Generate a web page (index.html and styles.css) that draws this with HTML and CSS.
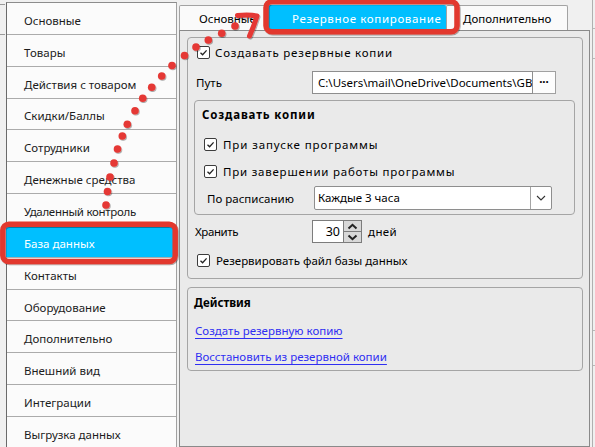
FILE: index.html
```html
<!DOCTYPE html>
<html lang="ru">
<head>
<meta charset="utf-8">
<title>Настройки — Резервное копирование</title>
<link rel="stylesheet" href="styles.css">
</head>
<body>
<div class="app">
  <div class="edge-left">
    <i class="tick tick-a"></i>
    <i class="tick tick-b"></i>
  </div>

  <nav class="sidebar">
    <div class="nav-item">Основные</div>
    <div class="nav-item">Товары</div>
    <div class="nav-item">Действия с товаром</div>
    <div class="nav-item">Скидки/Баллы</div>
    <div class="nav-item">Сотрудники</div>
    <div class="nav-item">Денежные средства</div>
    <div class="nav-item nav-item-tight">Удаленный контроль</div>
    <div class="nav-item nav-item-active">База данных</div>
    <div class="nav-item">Контакты</div>
    <div class="nav-item">Оборудование</div>
    <div class="nav-item">Дополнительно</div>
    <div class="nav-item">Внешний вид</div>
    <div class="nav-item">Интеграции</div>
    <div class="nav-item">Выгрузка данных</div>
  </nav>

  <main class="main">
    <div class="tabs">
      <div class="tab tab-first">Основные</div>
      <div class="tab tab-active">Резервное копирование</div>
      <div class="tab tab-last">Дополнительно</div>
    </div>

    <div class="panel">
      <section class="group group-backup">
        <div class="row row-enable">
          <span class="cb"><svg viewBox="0 0 11 11" width="11" height="11"><polyline points="2.5,5.8 4.6,7.8 8.6,3.4" fill="none" stroke="#222" stroke-width="1.3"/></svg></span>
          <span class="cb-label cb-label-loose">Создавать резервные копии</span>
        </div>

        <div class="row row-path">
          <span class="label label-wide">Путь</span>
          <div class="path">
            <div class="path-input">C:\Users\mail\OneDrive\Documents\GBS\Backup</div>
            <div class="path-btn">···</div>
          </div>
        </div>

        <section class="subgroup">
          <div class="subgroup-title">Создавать копии</div>
          <div class="row row-check row-first">
            <span class="cb"><svg viewBox="0 0 11 11" width="11" height="11"><polyline points="2.5,5.8 4.6,7.8 8.6,3.4" fill="none" stroke="#222" stroke-width="1.3"/></svg></span>
            <span class="cb-label cb-label-loose cb-label-looser">При запуске программы</span>
          </div>
          <div class="row row-check row-second">
            <span class="cb"><svg viewBox="0 0 11 11" width="11" height="11"><polyline points="2.5,5.8 4.6,7.8 8.6,3.4" fill="none" stroke="#222" stroke-width="1.3"/></svg></span>
            <span class="cb-label cb-label-loose">При завершении работы программы</span>
          </div>
          <div class="row row-schedule">
            <span class="label label-schedule">По расписанию</span>
            <div class="select">
              <div class="select-value">Каждые 3 часа</div>
              <div class="select-arrow"><svg viewBox="0 0 10 6" width="10" height="6"><polyline points="1,1 5,5 9,1" fill="none" stroke="#333" stroke-width="1.1"/></svg></div>
            </div>
          </div>
        </section>

        <div class="row row-keep">
          <span class="label label-keep">Хранить</span>
          <div class="spin">
            <div class="spin-value">30</div>
            <div class="spin-btns">
              <span class="spin-btn"><svg viewBox="0 0 11 7" width="11" height="7"><polyline points="1.5,5.5 5.5,1.8 9.5,5.5" fill="none" stroke="#222" stroke-width="2"/></svg></span>
              <span class="spin-btn spin-btn-down"><svg viewBox="0 0 11 7" width="11" height="7"><polyline points="1.5,1.5 5.5,5.2 9.5,1.5" fill="none" stroke="#222" stroke-width="2"/></svg></span>
            </div>
          </div>
          <span class="unit">дней</span>
        </div>

        <div class="row row-dbfile">
          <span class="cb"><svg viewBox="0 0 11 11" width="11" height="11"><polyline points="2.5,5.8 4.6,7.8 8.6,3.4" fill="none" stroke="#222" stroke-width="1.3"/></svg></span>
          <span class="cb-label">Резервировать файл базы данных</span>
        </div>
      </section>

      <section class="group group-actions">
        <div class="group-title">Действия</div>
        <div class="link-row link-row-first"><a class="link">Создать резервную копию</a></div>
        <div class="link-row link-row-second"><a class="link">Восстановить из резервной копии</a></div>
      </section>
    </div>
  </main>

  <div class="edge-right">
    <i class="rtick rtick-a"></i>
    <i class="rtick rtick-b"></i>
    <i class="rtick rtick-c"></i>
    <i class="rtick rtick-d"></i>
  </div>
</div>

<svg class="annotations" viewBox="0 0 595 447" width="595" height="447" aria-hidden="true">
  <defs>
    <filter id="sh" x="-50%" y="-50%" width="200%" height="200%">
      <feDropShadow dx="0.8" dy="1" stdDeviation="0.7" flood-color="#000" flood-opacity="0.35"/>
    </filter>
  </defs>
  <g fill="none" stroke="#e2392f" stroke-width="5.5" filter="url(#sh)">
    <rect x="2.8" y="224.2" width="172.4" height="37.3" rx="6"/>
    <rect x="266" y="1.4" width="191" height="30.3" rx="6"/>
  </g>
  <g fill="#e53935" filter="url(#sh)">
    <circle cx="106" cy="205" r="3.8"/>
    <circle cx="107.5" cy="191.5" r="3.8"/>
    <circle cx="110" cy="177" r="3.8"/>
    <circle cx="114" cy="163" r="3.8"/>
    <circle cx="117.5" cy="149" r="3.8"/>
    <circle cx="122.3" cy="136" r="3.8"/>
    <circle cx="127.3" cy="124.3" r="3.8"/>
    <circle cx="135" cy="110.7" r="3.8"/>
    <circle cx="142.7" cy="98.3" r="3.8"/>
    <circle cx="151.7" cy="87.3" r="3.8"/>
    <circle cx="161.7" cy="76" r="3.8"/>
    <circle cx="172" cy="65.5" r="3.8"/>
    <circle cx="184.5" cy="55.5" r="3.8"/>
    <circle cx="196" cy="47" r="3.8"/>
    <circle cx="208.3" cy="40" r="3.8"/>
    <circle cx="221.7" cy="33.3" r="3.8"/>
    <circle cx="235" cy="26" r="3.8"/>
  </g>
  <path d="M237.5 15.5 Q250 14.5 257 16 Q254 26 249.5 36" fill="none" stroke="#e53935" stroke-width="5" stroke-linecap="round" stroke-linejoin="round" filter="url(#sh)"/>
</svg>
</body>
</html>
```

FILE: styles.css
```css
html, body {
  margin: 0;
  padding: 0;
}

body {
  width: 595px;
  height: 447px;
  overflow: hidden;
  position: relative;
  background: #f0f0f0;
  font-family: "Noto Sans", "Open Sans", sans-serif;
  font-size: 11.5px;
  color: #000;
}

.app {
  display: flex;
  height: 447px;
}

/* left remnant strip */
.edge-left {
  width: 6px;
  display: flex;
  flex-direction: column;
}

.tick {
  display: block;
  width: 5px;
  height: 1px;
  background: #9a9a9a;
}

.tick-a { margin-top: 4px; }
.tick-b { margin-top: 29px; }

/* sidebar */
.sidebar {
  width: 169px;
  margin-top: 2px;
  border-top: 1px solid #8c8c8c;
  border-left: 1px solid #6a6a6a;
  border-right: 1px solid #a0a0a0;
  background: #fbfbfb;
  display: flex;
  flex-direction: column;
}

.nav-item {
  box-sizing: border-box;
  height: 31.85px;
  flex: none;
  border-bottom: 1px solid #ababab;
  padding: 4px 0 0 17px;
  display: flex;
  align-items: center;
  color: #1c1c1c;
  white-space: nowrap;
}

.nav-item-tight { letter-spacing: -0.3px; }

.nav-item-active {
  background: #00bfff;
  color: #fff;
  margin-left: -1px;
  padding-left: 18px;
}

/* main area */
.main {
  width: 411px;
  margin-left: 2px;
  display: flex;
  flex-direction: column;
}

.tabs {
  display: flex;
  height: 25px;
  margin-top: 5px;
}

.tab {
  box-sizing: border-box;
  height: 25px;
  border: 1px solid #a3a3a3;
  border-bottom: none;
  border-radius: 2px 2px 0 0;
  background: #fafafa;
  display: flex;
  align-items: center;
  white-space: nowrap;
}

.tab-first {
  width: 89px;
  padding-left: 19px;
}

.tab-active {
  width: 178px;
  padding-left: 23px;
  background: #00bfff;
  border-color: #00bfff;
  color: #fff;
  letter-spacing: 0.65px;
}

.tab-last {
  width: 122px;
  padding-left: 16px;
}

.panel {
  flex: 1;
  border: 1px solid #8a8a8a;
  background: #eaeaea;
  display: flex;
  flex-direction: column;
}

.group {
  box-sizing: border-box;
  border: 1px solid #a5a5a5;
  border-radius: 4px;
  margin-left: 7px;
  margin-right: 6px;
  display: flex;
  flex-direction: column;
}

.group-backup {
  margin-top: 6px;
  height: 242px;
}

.group-actions {
  margin-top: 8px;
  height: 84px;
}

.row {
  display: flex;
  align-items: center;
  flex: none;
}

.row-enable {
  margin-top: 5px;
  height: 19px;
  padding-left: 9px;
}

.cb {
  box-sizing: border-box;
  width: 13px;
  height: 13px;
  border: 1px solid #3c3c3c;
  border-radius: 2px;
  background: #fff;
  display: flex;
  align-items: center;
  justify-content: center;
  flex: none;
}

.cb svg { display: block; }

.cb-label {
  margin-left: 5px;
  white-space: nowrap;
}

.cb-label-loose { letter-spacing: 0.78px; }
.cb-label-looser { letter-spacing: 0.9px; }

.row-path {
  margin-top: 9px;
  height: 23px;
  padding-left: 8px;
}

.label { white-space: nowrap; }

.label-wide { width: 116px; }

.path {
  display: flex;
  height: 23px;
}

.path-input {
  box-sizing: border-box;
  width: 221px;
  height: 23px;
  border: 1px solid #8e8e8e;
  background: #fff;
  padding-left: 5px;
  line-height: 21px;
  white-space: nowrap;
  overflow: hidden;
}

.path-btn {
  box-sizing: border-box;
  width: 23px;
  height: 23px;
  border: 1px solid #a0a0a0;
  border-left: none;
  background: #fdfdfd;
  text-align: center;
  line-height: 19px;
  font-weight: bold;
}

/* nested group */
.subgroup {
  box-sizing: border-box;
  height: 115px;
  margin: 6px 7px 0 6px;
  border: 1px solid #a5a5a5;
  border-radius: 4px;
  padding-top: 6px;
  display: flex;
  flex-direction: column;
  flex: none;
}

.subgroup-title {
  height: 16px;
  line-height: 16px;
  padding-left: 7px;
  font-weight: bold;
  letter-spacing: 0.85px;
}

.row-check {
  height: 20px;
  padding-left: 9px;
}

.row-check .cb-label { margin-left: 6px; }

.row-first { margin-top: 11px; }
.row-second { margin-top: 7px; }

.row-schedule {
  margin-top: 5px;
  height: 24px;
  padding-left: 12px;
}

.label-schedule { width: 107px; }

.select {
  box-sizing: border-box;
  width: 238px;
  height: 24px;
  border: 1px solid #8e8e8e;
  border-radius: 2px;
  background: #fff;
  display: flex;
}

.select-value {
  flex: 1;
  padding-left: 3px;
  line-height: 22px;
}

.select-arrow {
  width: 20px;
  border-left: 1px solid #a5a5a5;
  display: flex;
  align-items: center;
  justify-content: center;
}

/* keep row */
.row-keep {
  margin-top: 5px;
  height: 23px;
  padding-left: 7px;
}

.label-keep {
  width: 117px;
  letter-spacing: -0.4px;
}

.spin {
  box-sizing: border-box;
  width: 50px;
  height: 23px;
  border: 1px solid #7c7c7c;
  background: #fff;
  display: flex;
}

.spin-value {
  flex: 1;
  text-align: right;
  padding-right: 3px;
  line-height: 21px;
  font-size: 12.5px;
}

.spin-btns {
  width: 17px;
  border-left: 1px solid #7c7c7c;
  display: flex;
  flex-direction: column;
}

.spin-btn {
  flex: 1;
  background: #d8d8d8;
  display: flex;
  align-items: center;
  justify-content: center;
}

.spin-btn-down { border-top: 1px solid #7c7c7c; }

.spin-btn svg { display: block; }

.unit {
  margin-left: 6px;
  letter-spacing: 0.4px;
}

.row-dbfile {
  margin-top: 7px;
  height: 20px;
  padding-left: 9px;
}

.row-dbfile .cb-label { margin-left: 6px; }

/* actions */
.group-title {
  margin-top: 7px;
  height: 16px;
  line-height: 16px;
  padding-left: 6px;
  font-weight: bold;
}

.link-row {
  height: 18px;
  line-height: 18px;
  padding-left: 7px;
}

.link-row-first { margin-top: 11px; }
.link-row-second { margin-top: 8px; }

.link {
  color: #2f2ff2;
  text-decoration: underline;
  text-underline-offset: 3px;
  text-decoration-thickness: 1px;
}

/* right remnant strip */
.edge-right {
  flex: 1;
  margin-left: 2px;
  border-left: 1px solid #b0b0b0;
  display: flex;
  flex-direction: column;
}

.rtick {
  display: block;
  height: 1px;
  background: #b8b8b8;
}

.rtick-a { margin-top: 28px; }
.rtick-b { margin-top: 29px; }
.rtick-c { margin-top: 271px; }
.rtick-d { margin-top: 34px; }

/* overlay annotations */
.annotations {
  position: absolute;
  left: 0;
  top: 0;
  pointer-events: none;
}
```
